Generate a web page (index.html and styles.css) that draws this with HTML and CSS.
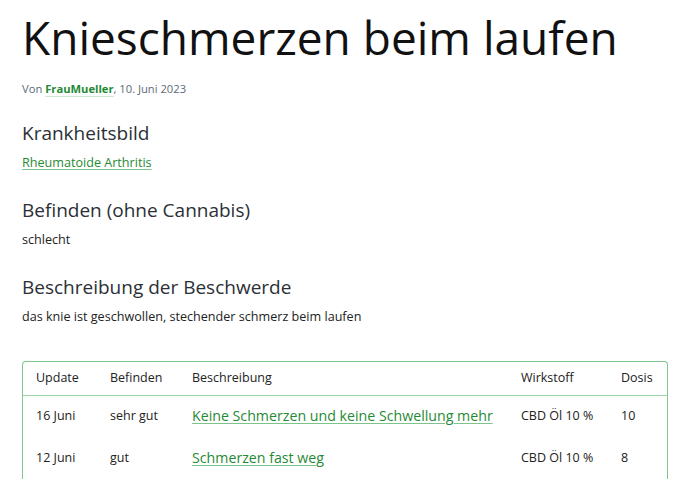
FILE: index.html
```html
<!DOCTYPE html>
<html lang="de">
<head>
    <meta charset="UTF-8">
    <meta name="viewport" content="width=device-width, initial-scale=1.0">
    <title>Knieschmerzen beim laufen</title>
    <link rel="stylesheet" href="styles.css">
</head>
<body>
    <h1 class="title">Knieschmerzen beim laufen</h1>
    <p class="meta">Von <a href="#" class="author">FrauMueller</a>, 10. Juni 2023</p>

    <section class="block">
        <h2>Krankheitsbild</h2>
        <p><a href="#" class="link">Rheumatoide Arthritis</a></p>
    </section>

    <section class="block">
        <h2>Befinden (ohne Cannabis)</h2>
        <p>schlecht</p>
    </section>

    <section class="block">
        <h2>Beschreibung der Beschwerde</h2>
        <p>das knie ist geschwollen, stechender schmerz beim laufen</p>
    </section>

    <div class="card">
        <table>
            <tr>
                <th class="c-date">Update</th>
                <th class="c-state">Befinden</th>
                <th class="c-desc">Beschreibung</th>
                <th class="c-agent">Wirkstoff</th>
                <th class="c-dose">Dosis</th>
            </tr>
            <tr>
                <td>16 Juni</td>
                <td>sehr gut</td>
                <td><a href="#" class="row-link">Keine Schmerzen und keine Schwellung mehr</a></td>
                <td>CBD Öl 10 %</td>
                <td>10</td>
            </tr>
            <tr>
                <td>12 Juni</td>
                <td>gut</td>
                <td><a href="#" class="row-link">Schmerzen fast weg</a></td>
                <td>CBD Öl 10 %</td>
                <td>8</td>
            </tr>
        </table>
    </div>
</body>
</html>
```

FILE: styles.css
```css
body { font-family: 'Open Sans', Lato, sans-serif; margin: 0; padding: 0 22px; color: #222; background: #fff; }
a { color: #1f8a35; text-decoration: underline; text-decoration-color: #7cc48a; text-underline-offset: 2px; }
p { margin: 0; font-size: 12.6px; line-height: 16px; }
.title { font-size: 46px; font-weight: 400; line-height: 52px; margin: 11px 0 0; color: #111; }
.meta { font-size: 11.2px; color: #5d6b77; margin-top: 18px; }
.author { font-weight: 700; text-decoration: none; border-bottom: 1px solid #cfe8d3; }
.block { margin-top: 27px; }
.block:first-of-type { margin-top: 24px; }
.block h2 { font-size: 19px; font-weight: 400; line-height: 24px; margin: 0 0 10px; color: #2b3036; }
.link { font-size: 12.6px; }
.card { margin-top: 36px; border: 1px solid #7cc98b; border-bottom: none; border-radius: 4px 4px 0 0; height: 117px; overflow: hidden; }
table { width: 100%; border-collapse: collapse; table-layout: fixed; font-size: 12.5px; }
th, td { text-align: left; padding: 0 0 0 13px; font-weight: 400; color: #222; }
th { height: 31px; padding-bottom: 2px; border-bottom: 1px solid #9dd5a7; }
td { height: 39px; padding-bottom: 3px; }
.c-date { width: 61px; }
.c-state { width: 69px; }
.c-desc { width: 316px; }
.c-agent { width: 87px; }
.row-link { font-size: 14.2px; }
```
